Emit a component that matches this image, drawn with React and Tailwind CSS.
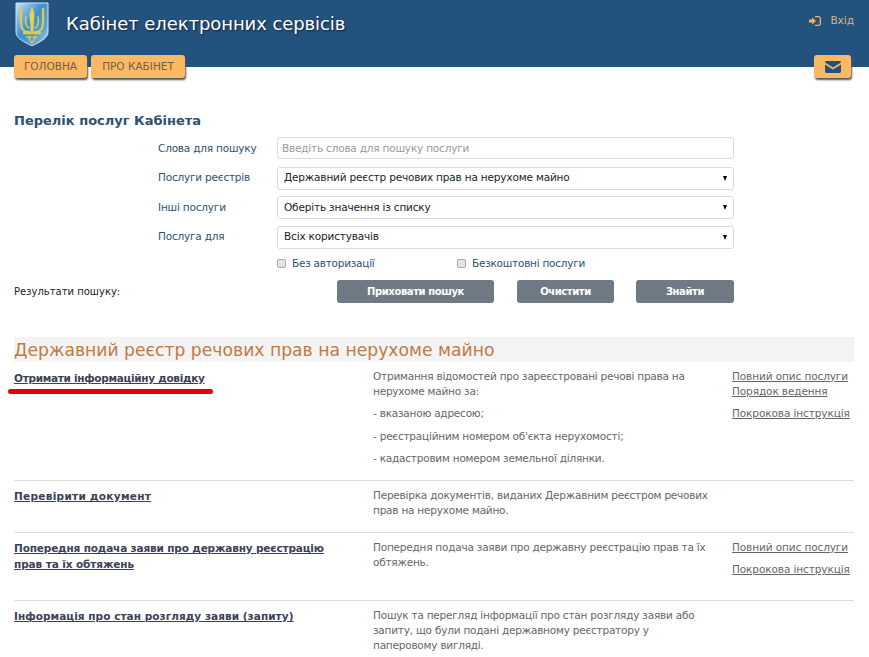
const font = "font-['DejaVu_Sans',Verdana,sans-serif]";

const services = [
  {
    title: [
      { text: 'Отримати інформаційну довідку', fit: 'tracking-[-0.3px] mt-[1px]' },
    ],
    text: ['Отримання відомостей про зареєстровані речові права на нерухоме майно за:', '- вказаною адресою;', '- реєстраційним номером об\'єкта нерухомості;', '- кадастровим номером земельної ділянки.'],
    links: ['Повний опис послуги', 'Порядок ведення', null, 'Покрокова інструкція'],
    height: 'h-[119px]',
    mark: true,
  },
  {
    title: [
      { text: 'Перевірити документ', fit: 'tracking-[0.3px]' },
    ],
    text: ['Перевірка документів, виданих Державним реєстром речових прав на нерухоме майно.'],
    links: [],
    height: 'h-[52px]',
  },
  {
    title: [
      { text: 'Попередня подача заяви про державну реєстрацію', fit: 'tracking-[-0.15px]' },
      { text: 'прав та їх обтяжень', fit: 'tracking-[-0.1px]' },
    ],
    text: ['Попередня подача заяви про державну реєстрацію прав та їх обтяжень.'],
    links: ['Повний опис послуги', null, 'Покрокова інструкція'],
    height: 'h-[68px]',
  },
  {
    title: [
      { text: 'Інформація про стан розгляду заяви (запиту)', fit: 'tracking-[0.05px]' },
    ],
    text: ['Пошук та перегляд інформації про стан розгляду заяви або запиту, що були подані державному реєстратору у паперовому вигляді.'],
    links: [],
    height: 'h-[70px]',
  },
];

function Trident() {
  return (
    <svg width="34" height="44" viewBox="0 0 34 44" className="shrink-0">
      <defs>
        <linearGradient id="shield" x1="0" y1="0" x2="1" y2="1">
          <stop offset="0" stopColor="#c4e2f4" />
          <stop offset="0.45" stopColor="#3f8fd0" />
          <stop offset="0.75" stopColor="#5ba6dc" />
          <stop offset="1" stopColor="#d4e9f6" />
        </linearGradient>
      </defs>
      <path d="M1 1H33V30C33 37 24 40 17 44C10 40 1 37 1 30Z" fill="url(#shield)" stroke="#d6e4ec" strokeWidth="1" />
      <g fill="none" stroke="#e0cc48" strokeLinecap="round">
        <path d="M6 7C6 14 5 22 7 26C8 29 11 30 14 30" strokeWidth="2.2" />
        <path d="M28 7C28 14 29 22 27 26C26 29 23 30 20 30" strokeWidth="2.2" />
        <path d="M11 15C10 20 11 24 14 26M23 15C24 20 23 24 20 26" strokeWidth="1.5" />
        <path d="M9 31H25" strokeWidth="2.4" />
        <path d="M12 35H22M14 35C14 38 15 39 17 41C19 39 20 38 20 35" strokeWidth="1.4" />
      </g>
      <path d="M17 4L19.5 12L18.2 30H15.8L14.5 12Z" fill="#e6d350" />
      <path d="M15 32H19L17 36Z" fill="#8d9a4a" />
    </svg>
  );
}

function OrangeButton({ children, className }) {
  return (
    <button className={`h-[23px] rounded-[3px] bg-[#fdb863] text-[#6b6350] text-[10.5px] shadow-[1px_2px_2px_#555] ${className}`}>
      {children}
    </button>
  );
}

function FormRow({ label, children }) {
  return (
    <div className="flex items-center h-[29.5px]">
      <div className="w-[119px] text-[#2d5170] text-[10.5px] tracking-[-0.2px]">{label}</div>
      {children}
    </div>
  );
}

function Dropdown({ value }) {
  return (
    <div className="relative w-[457px]">
      <select className="block w-full h-[23px] appearance-none rounded-[3px] border border-[#dcdcdc] bg-white pl-[6px] text-[10.5px] tracking-[-0.17px] text-[#222]" defaultValue={value}>
        <option>{value}</option>
      </select>
      <span className="absolute right-[7px] top-[9px] w-0 h-0 border-x-[2.5px] border-x-transparent border-t-[5px] border-t-black" />
    </div>
  );
}

function GreyButton({ children, className }) {
  return (
    <button className={`h-[23px] rounded-[3px] bg-[#6f7a85] text-white text-[10px] tracking-[-0.4px] font-bold ${className}`}>
      {children}
    </button>
  );
}

function ServiceRow({ item, last }) {
  return (
    <div className={`relative flex pt-[7px] ${item.height} ${last ? '' : 'border-b border-[#dedede]'}`}>
      <div className="w-[359px] shrink-0">
        {item.title.map((line) => (
          <div key={line.text} className={`h-[16px] leading-[16px] text-[10.5px] font-bold underline text-[#3d4058] whitespace-nowrap ${line.fit}`}>{line.text}</div>
        ))}
      </div>
      <div className="w-[359px] shrink-0 pr-[24px] text-[10.5px] tracking-[-0.22px] leading-[15px] text-[#666]">
        {item.text.map((line, i) => (
          <p key={i} className="mb-[7.3px] mt-0">{line}</p>
        ))}
      </div>
      <div className="text-[10.5px] tracking-[-0.1px] leading-[15px] text-[#666] underline whitespace-nowrap">
        {item.links.map((link, i) => (
          link ? <div key={i} className={i > 0 && item.links[i - 1] === null ? 'mt-[7px]' : ''}>{link}</div> : null
        ))}
      </div>
      {item.mark && <div className="absolute left-[-6px] top-[27px] w-[205px] h-[5px] rounded-full bg-[#e8000d]" />}
    </div>
  );
}

export default function App() {
  return (
    <div className={`${font} h-[657px] overflow-hidden bg-white`}>
      <header className="h-[67px] bg-[#24527f] flex items-start justify-between pl-[15px] pr-[15px] pt-[2px]">
        <div className="flex items-center gap-[17px]">
          <Trident />
          <h1 className="-mt-[2px] text-[18px] text-white font-normal tracking-[-0.08px] [text-shadow:1px_1px_2px_#123]">Кабінет електронних сервісів</h1>
        </div>
        <div className="flex items-center gap-[9px] mt-[11px] text-[#d9b67a] text-[10.5px]">
          <svg width="12" height="12" viewBox="0 0 12 12" fill="#f0b45c">
            <path d="M0 4.6H3V2.6L7 6L3 9.4V7.4H0Z" />
            <path d="M6 1H9.5C10.9 1 12 2.1 12 3.5V8.5C12 9.9 10.9 11 9.5 11H6V9.7H9.5C10.2 9.7 10.7 9.2 10.7 8.5V3.5C10.7 2.8 10.2 2.3 9.5 2.3H6Z" />
          </svg>
          <span>Вхід</span>
        </div>
      </header>

      <nav className="flex justify-between pl-[14px] pr-[18px] -mt-[12px] relative">
        <div className="flex gap-[4px]">
          <OrangeButton className="w-[73px]">ГОЛОВНА</OrangeButton>
          <OrangeButton className="w-[94px]">ПРО КАБІНЕТ</OrangeButton>
        </div>
        <OrangeButton className="w-[37px] flex items-center justify-center">
          <svg width="16" height="12" viewBox="0 0 16 12" fill="#24527f">
            <path d="M1.5 0H14.5C15.3 0 16 .7 16 1.5L8 6.5L0 1.5C0 .7.7 0 1.5 0Z" />
            <path d="M0 3.4L8 8.4L16 3.4V10.5C16 11.3 15.3 12 14.5 12H1.5C.7 12 0 11.3 0 10.5Z" />
          </svg>
        </OrangeButton>
      </nav>

      <main className="px-[14px] pr-[15px]">
        <h2 className="mt-[33px] text-[13px] font-bold text-[#2d5170] leading-[20px]">Перелік послуг Кабінета</h2>

        <div className="ml-[144px] mt-[3px]">
          <FormRow label="Слова для пошуку">
            <input placeholder="Введіть слова для пошуку послуги" className="block -mt-[2px] w-[457px] h-[22px] rounded-[3px] border border-[#dcdcdc] px-[4px] text-[10.5px] tracking-[-0.2px] placeholder:text-[#999]" />
          </FormRow>
          <FormRow label="Послуги реєстрів"><Dropdown value="Державний реєстр речових прав на нерухоме майно" /></FormRow>
          <FormRow label="Інші послуги"><Dropdown value="Оберіть значення із списку" /></FormRow>
          <FormRow label="Послуга для"><Dropdown value="Всіх користувачів" /></FormRow>
          <div className="flex items-center ml-[119px] h-[23px] text-[10.5px] tracking-[-0.25px] text-[#2d5170]">
            <label className="flex items-center gap-[6px] w-[180px]">
              <span className="w-[9px] h-[9px] rounded-[2px] border border-[#aaa] bg-[#e4e4e4]" />Без авторизації
            </label>
            <label className="flex items-center gap-[6px]">
              <span className="w-[9px] h-[9px] rounded-[2px] border border-[#aaa] bg-[#e4e4e4]" />Безкоштовні послуги
            </label>
          </div>
        </div>

        <div className="flex items-center mt-[5px]">
          <div className="w-[323px] text-[10px] text-[#222]">Результати пошуку:</div>
          <GreyButton className="w-[157px]">Приховати пошук</GreyButton>
          <GreyButton className="w-[97px] ml-[23px]">Очистити</GreyButton>
          <GreyButton className="w-[98px] ml-[22px]">Знайти</GreyButton>
        </div>

        <h2 className="mt-[34px] h-[25px] bg-[#f3f3f3] text-[17.2px] leading-[26px] text-[#c07a45] font-normal">Державний реєстр речових прав на нерухоме майно</h2>

        {services.map((item, i) => (
          <ServiceRow key={i} item={item} last={i === services.length - 1} />
        ))}
      </main>
    </div>
  );
}
